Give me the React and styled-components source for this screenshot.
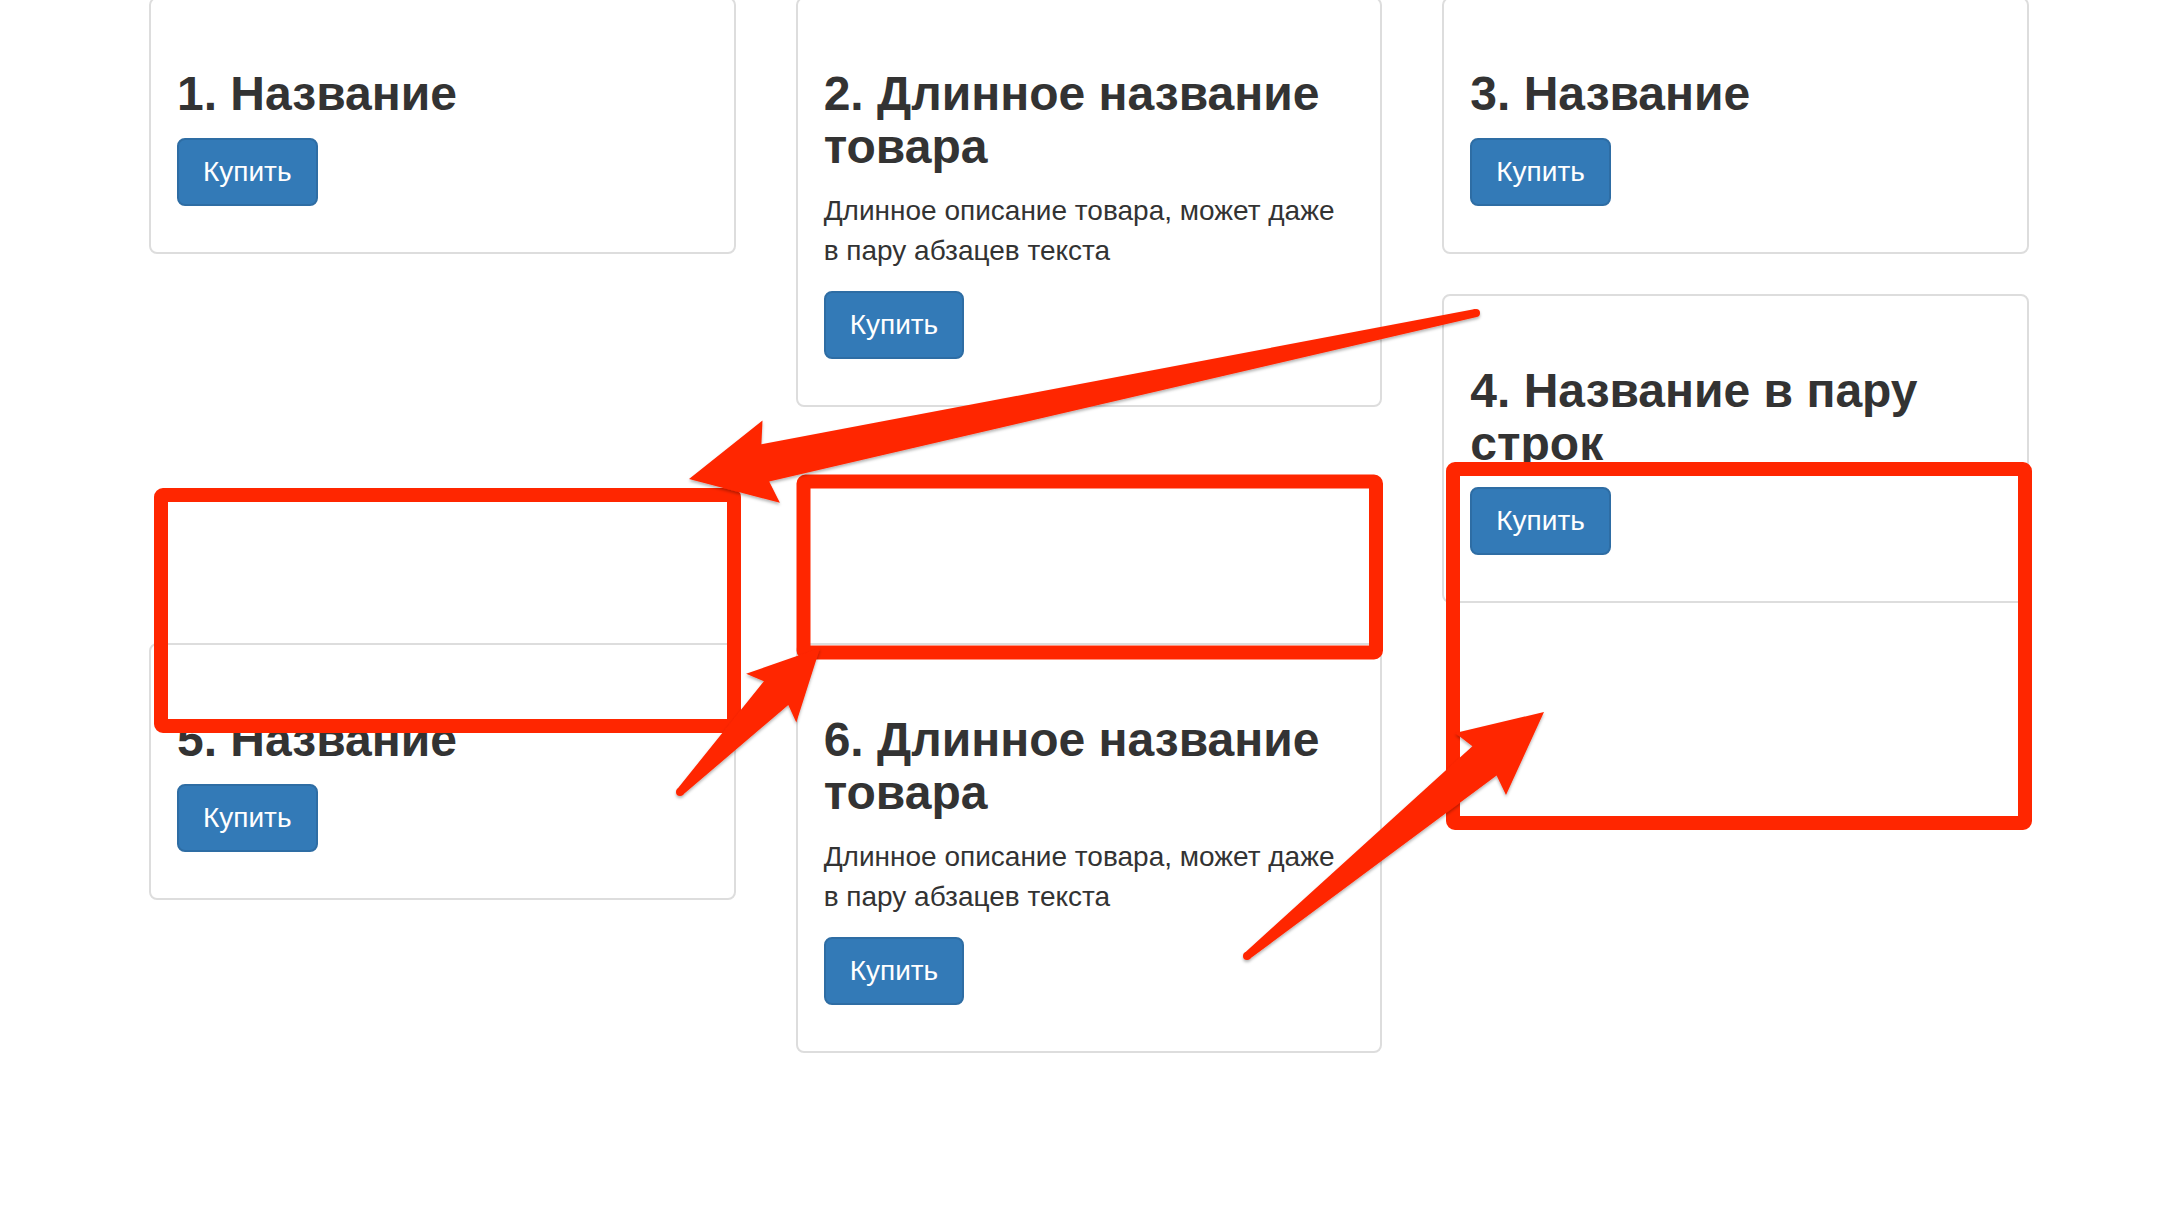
import React from 'react'
import styled, { createGlobalStyle } from 'styled-components'

const GlobalStyle = createGlobalStyle`
  * { box-sizing: border-box; }
  html, body {
    margin: 0;
    padding: 0;
    background: #fff;
  }
  body {
    font-family: "Liberation Sans", Arial, sans-serif;
    font-size: 28px;
    line-height: 40px;
    color: #333;
  }
`

const Page = styled.div`
  position: relative;
  width: 2178px;
  height: 1206px;
  overflow: hidden;
`

// bootstrap 3 style container, everything doubled (retina screenshot)
const Container = styled.div`
  width: 1940px;
  margin: -3px auto 0;
  padding: 0 30px;
`

const Row = styled.div`
  margin: 0 -30px;

  &::after {
    content: "";
    display: table;
    clear: both;
  }
`

// floated columns, so the cards stack the way col-md-4 does
const Col = styled.div`
  float: left;
  width: 33.3333%;
  padding: 0 30px;
`

const Thumbnail = styled.div`
  padding: 8px;
  margin-bottom: 40px;
  background: #fff;
  border: 2px solid #ddd;
  border-radius: 8px;
`

const Caption = styled.div`
  padding: 18px;
`

const Title = styled.h3`
  margin: 43px 0 17px;
  font-size: 48px;
  line-height: 1.1;
  font-weight: 700;
  color: #333;
`

const Text = styled.p`
  margin: 0 0 20px;
`

const BuyButton = styled.button`
  display: inline-block;
  padding: 12px 24px;
  font-family: inherit;
  font-size: 28px;
  line-height: 40px;
  color: #fff;
  background: #337ab7;
  border: 2px solid #2e6da4;
  border-radius: 8px;
  cursor: pointer;
`

const Overlay = styled.svg`
  position: absolute;
  top: 0;
  left: 0;
  width: 2178px;
  height: 1206px;
  pointer-events: none;
`

const RED = '#ff2600'

const products = [
  { id: 1, title: '1. Название' },
  { id: 2, title: '2. Длинное название товара', text: 'Длинное описание товара, может даже в пару абзацев текста' },
  { id: 3, title: '3. Название' },
  { id: 4, title: '4. Название в пару строк' },
  { id: 5, title: '5. Название' },
  { id: 6, title: '6. Длинное название товара', text: 'Длинное описание товара, может даже в пару абзацев текста' },
]

const boxes = [
  { x: 161, y: 495, w: 573, h: 231 },
  { x: 803.5, y: 481.5, w: 572.5, h: 171 },
  { x: 1453, y: 469, w: 572, h: 354 },
]

const arrows = [
  { tail: [1476, 313], tip: [689, 479], wingBack: 84, wingHalf: 42, notchBack: 78, baseHalf: 19 },
  { tail: [680, 792], tip: [820, 648], wingBack: 70, wingHalf: 35, notchBack: 63, baseHalf: 17 },
  { tail: [1247, 956], tip: [1544, 712], wingBack: 82, wingHalf: 40, notchBack: 77, baseHalf: 19 },
]

const tailHalf = 4

function arrowPoints({ tail, tip, wingBack, wingHalf, notchBack, baseHalf }) {
  const dx = tip[0] - tail[0]
  const dy = tip[1] - tail[1]
  const len = Math.hypot(dx, dy)
  const ux = dx / len
  const uy = dy / len
  const nx = -uy
  const ny = ux
  const at = (along, side) => [tail[0] + ux * along + nx * side, tail[1] + uy * along + ny * side]
  return [
    at(0, -tailHalf),
    at(len - notchBack, -baseHalf),
    at(len - wingBack, -wingHalf),
    at(len, 0),
    at(len - wingBack, wingHalf),
    at(len - notchBack, baseHalf),
    at(0, tailHalf),
  ].map(p => p.map(v => v.toFixed(1)).join(',')).join(' ')
}

function ProductCard({ title, text }) {
  return (
    <Thumbnail>
      <Caption>
        <Title>{title}</Title>
        {text && <Text>{text}</Text>}
        <Text>
          <BuyButton>Купить</BuyButton>
        </Text>
      </Caption>
    </Thumbnail>
  )
}

function Annotations() {
  return (
    <Overlay viewBox="0 0 2178 1206">
      <defs>
        <filter id="arrowShadow" x="-10%" y="-10%" width="120%" height="120%">
          <feDropShadow dx="0" dy="2" stdDeviation="1.5" floodColor="#000" floodOpacity="0.3" />
        </filter>
      </defs>
      {boxes.map((b, i) => (
        <rect key={i} x={b.x} y={b.y} width={b.w} height={b.h} rx="2"
          fill="none" stroke={RED} strokeWidth="14" strokeLinejoin="round" />
      ))}
      {arrows.map((a, i) => (
        <g key={i} fill={RED} filter="url(#arrowShadow)">
          <polygon points={arrowPoints(a)} />
          <circle cx={a.tail[0]} cy={a.tail[1]} r={tailHalf} />
        </g>
      ))}
    </Overlay>
  )
}

export default function App() {
  return (
    <Page>
      <GlobalStyle />
      <Container>
        <Row>
          {products.map(p => (
            <Col key={p.id}>
              <ProductCard title={p.title} text={p.text} />
            </Col>
          ))}
        </Row>
      </Container>
      <Annotations />
    </Page>
  )
}
